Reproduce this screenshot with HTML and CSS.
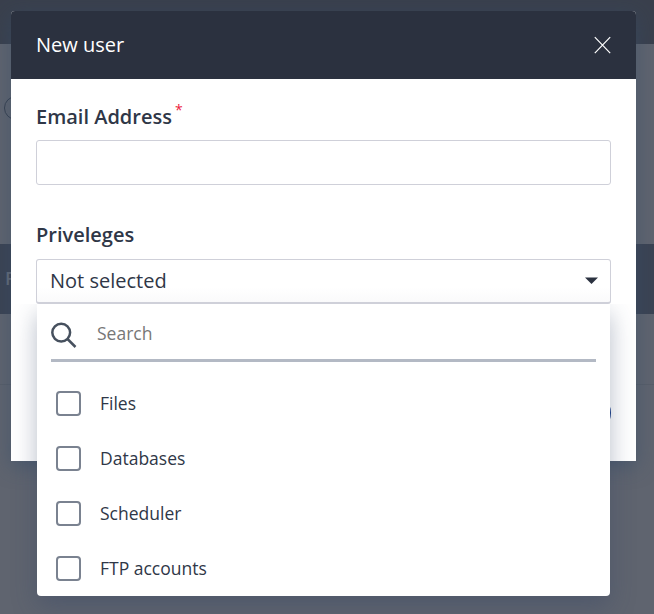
FILE: index.html
```
<!DOCTYPE html>
<html lang="en">
<head>
<meta charset="utf-8">
<title>New user</title>
<link rel="stylesheet" href="styles.css">
</head>
<body>
<div class="page">
  <div class="page-top"></div>
  <div class="page-tools"><span class="page-pill"></span></div>
  <div class="page-table-head"><span>F</span></div>
  <div class="page-row"></div>
</div>
<section class="modal">
  <header class="modal-header">
    <h1>New user</h1>
    <svg class="close" width="17" height="18" viewBox="0 0 17 18"><path d="M.8 1.200L16.200 17.200M16.200 1.200L.8 17.200" fill="none" stroke="#fff" stroke-width="1.200"/></svg>
  </header>
  <div class="modal-body">
    <label class="label">Email Address<span class="required">*</span></label>
    <div class="field"></div>
    <label class="label label-second">Priveleges</label>
    <div class="select">
      <div class="field select-field">
        <span>Not selected</span>
        <svg width="13" height="7" viewBox="0 0 13 7"><path d="M0 .5H13L6.500 7Z" fill="#2b3240"/></svg>
      </div>
      <div class="menu">
        <div class="search">
          <svg width="27" height="27" viewBox="0 0 27 27"><g fill="none" stroke="#46505e" stroke-width="2.500"><circle cx="10.200" cy="10.600" r="8.900"/><path d="M16.500 17L24.500 25"/></g></svg>
          <span>Search</span>
        </div>
        <ul class="options">
          <li><i class="box"></i><span>Files</span></li>
          <li><i class="box"></i><span>Databases</span></li>
          <li><i class="box"></i><span>Scheduler</span></li>
          <li><i class="box"></i><span>FTP accounts</span></li>
        </ul>
      </div>
    </div>
    <div class="actions"><span class="submit"></span></div>
  </div>
</section>
</body>
</html>
```
FILE: styles.css
```
* { box-sizing: border-box; }
body {
  margin: 0;
  height: 614px;
  padding: 11px 18px 0 11px;
  overflow: hidden;
  font-family: "Open Sans", sans-serif;
  color: #2f3747;
}
.page {
  position: absolute;
  inset: 0;
  background: #5f646f;
}
.page-top { height: 44px; background: #3a404d; }
.page-tools { height: 200px; padding: 52px 0 0 4px; }
.page-pill {
  display: block;
  width: 120px;
  height: 24px;
  border: 1px solid #363f4e;
  border-radius: 12px;
}
.page-table-head {
  height: 70px;
  padding-left: 5px;
  background: #3b4353;
  color: #656c79;
  font-size: 18px;
  font-weight: 600;
  line-height: 69px;
}
.page-row { height: 71px; border-bottom: 1px solid #585e69; }
.modal {
  position: relative;
  height: 450px;
  background: #fff;
  border-radius: 4px 4px 0 0;
  box-shadow: 0 5px 20px rgba(50, 75, 105, .5);
}
.modal-header {
  display: flex;
  align-items: center;
  justify-content: space-between;
  height: 68px;
  padding: 0 25px;
  border-radius: 4px 4px 0 0;
  background: #2b313f;
  color: #fff;
}
.modal-header h1 { margin: 0 0 2px; font-size: 20px; font-weight: 400; }
.modal-body { padding: 24px 25px 0; }
.label {
  display: flex;
  height: 28px;
  font-size: 20px;
  font-weight: 600;
  line-height: 28px;
}
.required {
  margin: -7px 0 0 3px;
  color: #ed1c40;
  font-size: 14px;
  font-weight: 400;
}
.field {
  height: 45px;
  margin-top: 9px;
  border: 1px solid #cfd0d9;
  border-radius: 3px;
}
.label-second { margin-top: 36px; }
.select { position: relative; }
.select-field {
  display: flex;
  align-items: center;
  justify-content: space-between;
  margin-top: 10px;
  padding: 0 12px 1px 13px;
  border-bottom-width: 2px;
  font-size: 20px;
  background: linear-gradient(#fff 65%, #fafafb);
}
.menu {
  position: absolute;
  top: 45px;
  left: 1px;
  right: 1px;
  height: 292px;
  padding: 0 14px;
  border-radius: 0 0 4px 4px;
  background: #fff;
  box-shadow: 0 10px 24px rgba(50, 67, 99, .35);
  clip-path: inset(0 -40px -50px);
}
.search {
  display: flex;
  gap: 19px;
  height: 58px;
  padding-top: 18px;
  border-bottom: 3px solid #b3b9c4;
  color: #777;
  font-size: 17.5px;
}
.search span { line-height: 22px; }
.options { margin: 0; padding: 14px 0 0 5px; list-style: none; }
.options li {
  display: flex;
  align-items: center;
  gap: 19px;
  height: 55px;
  font-size: 17.5px;
}
.options span { margin-bottom: 2px; }
.box {
  width: 25px;
  height: 25px;
  border: 2px solid #7a8290;
  border-radius: 4px;
}
.actions { display: flex; justify-content: flex-end; padding-top: 87px; }
.submit { width: 110px; height: 44px; border-radius: 22px; background: #173b88; }
```
